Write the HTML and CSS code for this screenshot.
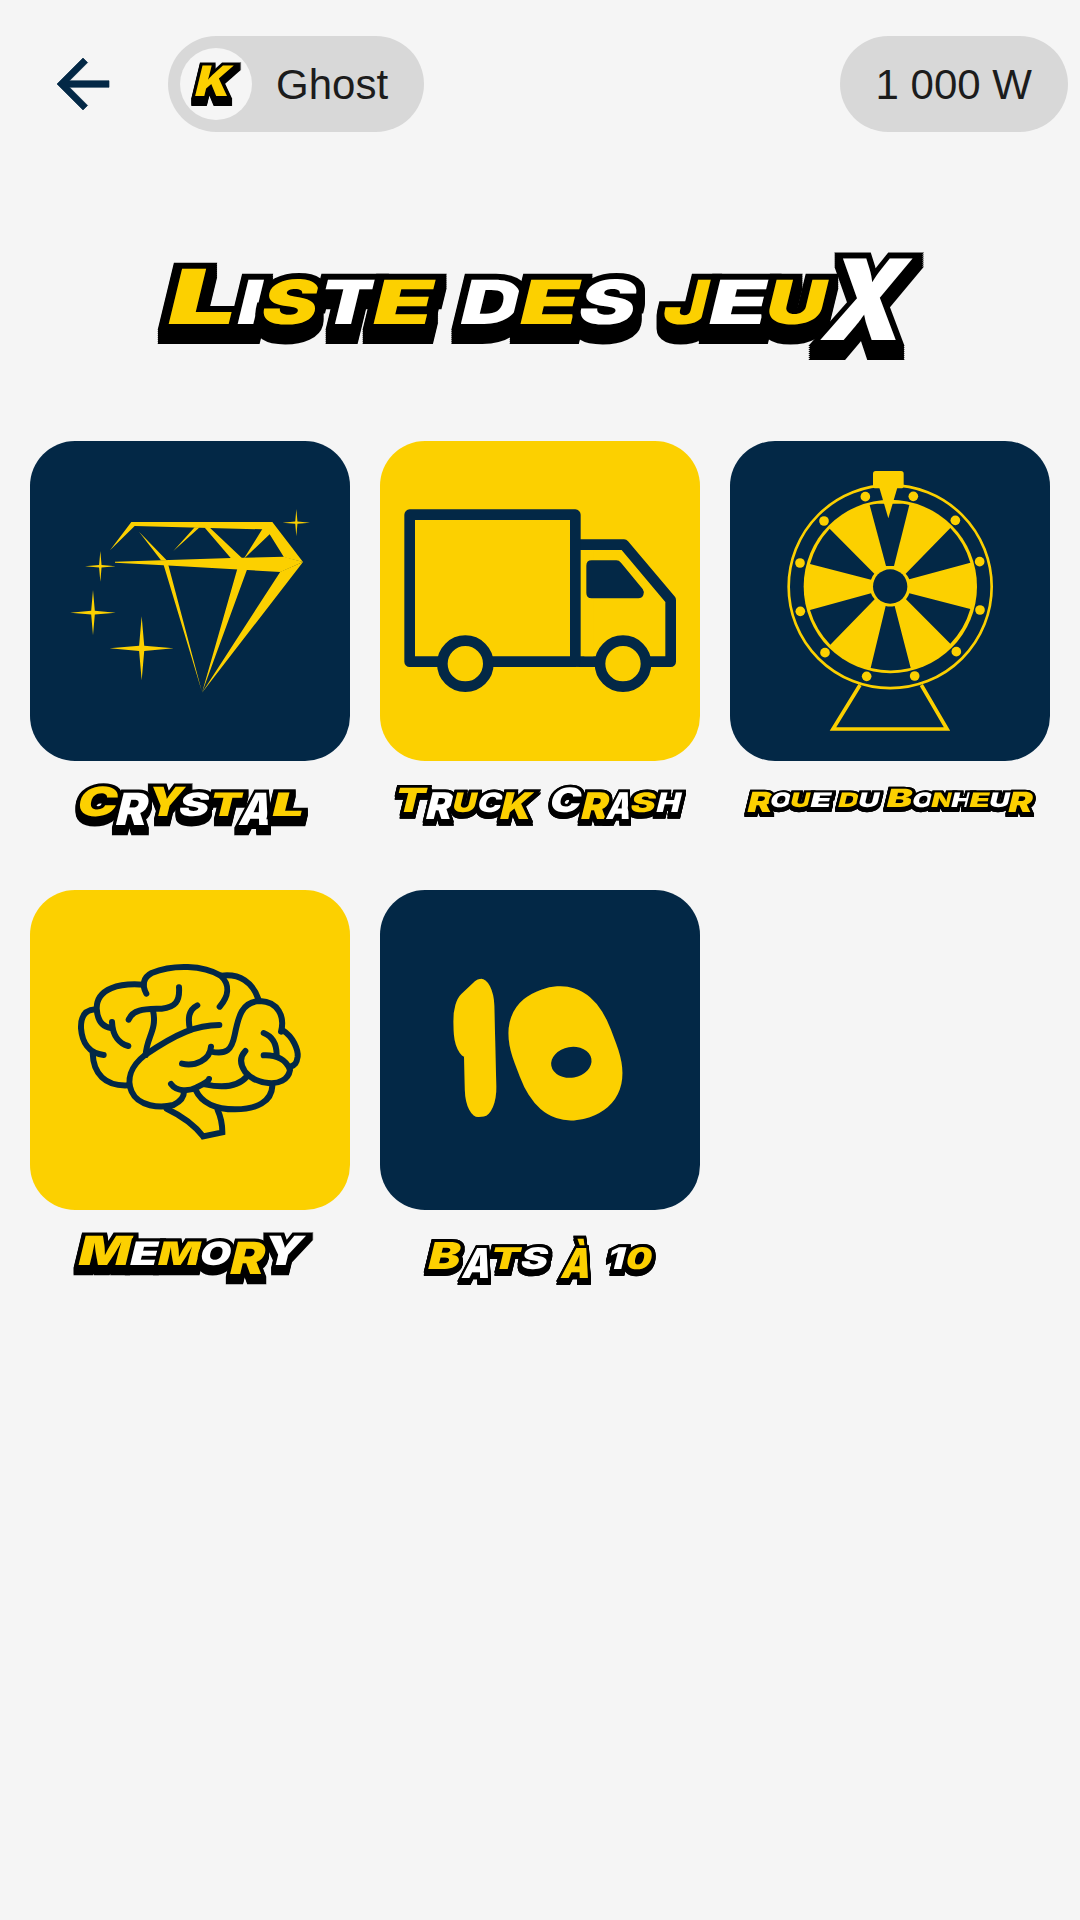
FILE: index.html
```html
<!DOCTYPE html>
<html lang="fr">
<head>
    <meta charset="UTF-8">
    <title>Liste des jeux</title>
    <link rel="stylesheet" href="styles.css">
</head>
<body>
    <header class="topbar">
        <a class="back" href="#">
            <svg width="78" height="78" viewBox="0 0 24 24"><path d="M20 11H7.83l5.59-5.59L12 4l-8 8 8 8 1.41-1.41L7.83 13H20v-2z"/></svg>
        </a>
        <div class="pill user">
            <div class="avatar">
                <svg class="logo logo-k" width="46" height="44" viewBox="0 0 46 44">
                    <text transform="translate(0 33.5) skewX(-13.6)"><tspan class="y" x="0" textLength="35" lengthAdjust="spacingAndGlyphs">K</tspan></text>
                </svg>
            </div>
            <span>Ghost</span>
        </div>
        <div class="pill solde"><span>1 000 W</span></div>
    </header>

    <h1 class="titre">
        <svg class="logo logo-titre" width="764" height="110" viewBox="0 0 764 110">
            <text transform="translate(0 72.7) skewX(-13.6)"><tspan class="y cap" x="5" textLength="69" lengthAdjust="spacingAndGlyphs">L</tspan><tspan x="76" textLength="23" lengthAdjust="spacingAndGlyphs">i</tspan><tspan class="y" x="100" textLength="56" lengthAdjust="spacingAndGlyphs">s</tspan><tspan x="157" textLength="56" lengthAdjust="spacingAndGlyphs">t</tspan><tspan class="y" x="211" textLength="60" lengthAdjust="spacingAndGlyphs">e</tspan> <tspan x="299" textLength="60" lengthAdjust="spacingAndGlyphs">d</tspan><tspan class="y" x="358" textLength="59" lengthAdjust="spacingAndGlyphs">e</tspan><tspan x="417" textLength="57" lengthAdjust="spacingAndGlyphs">s</tspan> <tspan class="y" x="502" textLength="46" lengthAdjust="spacingAndGlyphs">j</tspan><tspan x="547" textLength="59" lengthAdjust="spacingAndGlyphs">e</tspan><tspan class="y" x="604" textLength="60" lengthAdjust="spacingAndGlyphs">u</tspan><tspan class="big" x="664" y="16" textLength="80" lengthAdjust="spacingAndGlyphs">X</tspan></text>
        </svg>
    </h1>

    <main class="jeux">
        <a class="jeu" href="#">
            <div class="carte bleu">
                <svg width="320" height="320" viewBox="0 3 960 960">
                    <defs><path id="etoile" d="M0-1 .08-.08 1 0 .08.08 0 1-.08.08-1 0-.08-.08z"/></defs>
                    <g class="plein">
                        <path d="M240 331 304 246H727L719 268 697 268 314 258z"/>
                        <path d="M727 246 819 366 762 352 719 283 641 357 697 267z"/>
                        <path d="M255 365 604 354 762 350 819 366 751 396 401 376 255 368z"/>
                        <path d="M327 275 410 361H393z M430 333 494 262H509z M523 262H538L638 356H604z"/>
                        <path d="M401 375H415L516 756z M622 386H652L516 758z M751 395 819 366 516 758z"/>
                        <use href="#etoile" transform="translate(211 379) scale(46)"/>
                        <use href="#etoile" transform="translate(189 518) scale(68)"/>
                        <use href="#etoile" transform="translate(335 625) scale(96)"/>
                        <use href="#etoile" transform="translate(799 248) scale(41)"/>
                    </g>
                </svg>
            </div>
            <svg class="logo logo-crystal" width="233" height="70" viewBox="0 0 233 70">
                <text transform="translate(0 33) skewX(-13.6)"><tspan class="y cap" x="1" textLength="40" lengthAdjust="spacingAndGlyphs">C</tspan><tspan class="leg" x="42" y="9" textLength="31" lengthAdjust="spacingAndGlyphs">r</tspan><tspan class="y cap" x="71" y="0" textLength="35" lengthAdjust="spacingAndGlyphs">y</tspan><tspan x="103" textLength="30" lengthAdjust="spacingAndGlyphs">s</tspan><tspan class="y" x="134" textLength="31" lengthAdjust="spacingAndGlyphs">t</tspan><tspan class="leg" x="166" y="9" textLength="31" lengthAdjust="spacingAndGlyphs">a</tspan><tspan class="y" x="196" y="0" textLength="32" lengthAdjust="spacingAndGlyphs">l</tspan></text>
            </svg>
        </a>

        <a class="jeu" href="#">
            <div class="carte jaune">
                <svg width="320" height="320" viewBox="0 3 960 960">
                    <g class="camion">
                        <path d="M597 314H732L872 480V665H597z"/>
                        <path d="M89 224H586V665H89z"/>
                        <circle cx="256" cy="671" r="69"/>
                        <circle cx="729" cy="671" r="69"/>
                    </g>
                    <path class="cabine" d="M602 330H640V649H602z"/>
                    <path class="vitre" d="M635 361H709Q717 361 723 368L788 447Q794 455 790 465 786 475 775 475H635Q619 475 619 459V377Q619 361 635 361z"/>
                </svg>
            </div>
            <svg class="logo logo-truck" width="291" height="70" viewBox="0 -3 291 70">
                <text transform="translate(0 26.3) skewX(-13.6)"><tspan class="y cap" x="-2" textLength="30" lengthAdjust="spacingAndGlyphs">T</tspan><tspan class="leg" x="31" y="7" textLength="26" lengthAdjust="spacingAndGlyphs">r</tspan><tspan class="y" x="56" y="0" textLength="24" lengthAdjust="spacingAndGlyphs">u</tspan><tspan x="81" textLength="25" lengthAdjust="spacingAndGlyphs">c</tspan><tspan class="y leg" x="105" y="7" textLength="31" lengthAdjust="spacingAndGlyphs">k</tspan> <tspan class="cap" x="153" y="0" textLength="31" lengthAdjust="spacingAndGlyphs">C</tspan><tspan class="y leg" x="186" y="7" textLength="27" lengthAdjust="spacingAndGlyphs">r</tspan><tspan class="leg" x="212" y="7" textLength="24" lengthAdjust="spacingAndGlyphs">a</tspan><tspan class="y" x="234" y="0" textLength="25" lengthAdjust="spacingAndGlyphs">s</tspan><tspan x="260" textLength="24" lengthAdjust="spacingAndGlyphs">h</tspan></text>
            </svg>
        </a>

        <a class="jeu" href="#">
            <div class="carte bleu">
                <svg width="320" height="320" viewBox="0 3 960 960">
                    <g class="trait">
                        <circle cx="480.500" cy="440" r="304.500" stroke-width="8"/>
                        <path d="M390 735 309 867H651L574 735" stroke-width="11"/>
                    </g>
                    <circle class="plein" cx="481" cy="439.500" r="260"/>
                    <g class="creux">
                        <path d="M492 378 538 195A251 251 0 0 0 519 191H442A251 251 0 0 0 419 195L468 378z"/>
                        <path d="M538 418 721 368A251 251 0 0 0 661 264L527 401Q534 408 538 418z"/>
                        <path d="M538 460 721 507A251 251 0 0 1 661 611L528 478Q535 470 538 460z"/>
                        <path d="M494 498 542 684A251 251 0 0 1 422 684L467 498Q480 501 494 498z"/>
                        <path d="M423 460 240 510A251 251 0 0 0 301 614L434 478Q426 470 423 460z"/>
                        <path d="M423 419 240 372A251 251 0 0 1 299 266L433 401Q426 408 423 419z"/>
                        <circle cx="480.500" cy="439.500" r="51.500"/>
                    </g>
                    <g class="plein">
                        <circle cx="406" cy="170" r="14.500"/><circle cx="550" cy="169" r="14.500"/>
                        <circle cx="282" cy="243" r="14.500"/><circle cx="676" cy="241" r="14.500"/>
                        <circle cx="210" cy="369" r="14.500"/><circle cx="749" cy="365" r="14.500"/>
                        <circle cx="211" cy="514" r="14.500"/><circle cx="750" cy="510" r="14.500"/>
                        <circle cx="285" cy="638" r="14.500"/><circle cx="679" cy="635" r="14.500"/>
                        <circle cx="410" cy="709" r="14.500"/><circle cx="554" cy="708" r="14.500"/>
                        <rect x="429" y="93" width="92" height="52" rx="8"/>
                        <path d="M448 143H502L475 235z"/>
                    </g>
                </svg>
            </div>
            <svg class="logo logo-roue" width="291" height="70" viewBox="0 -3 291 70">
                <text transform="translate(0 20.7) skewX(-13.6)"><tspan class="y leg" x="2" y="5" textLength="25" lengthAdjust="spacingAndGlyphs">R</tspan><tspan x="24" y="0" textLength="21" lengthAdjust="spacingAndGlyphs">o</tspan><tspan class="y" x="44" textLength="21" lengthAdjust="spacingAndGlyphs">u</tspan><tspan x="64" textLength="21" lengthAdjust="spacingAndGlyphs">e</tspan> <tspan class="y" x="92" textLength="21" lengthAdjust="spacingAndGlyphs">d</tspan><tspan x="112" textLength="21" lengthAdjust="spacingAndGlyphs">u</tspan> <tspan class="y cap" x="140" textLength="26" lengthAdjust="spacingAndGlyphs">B</tspan><tspan x="166" textLength="21" lengthAdjust="spacingAndGlyphs">o</tspan><tspan class="y" x="185" textLength="22" lengthAdjust="spacingAndGlyphs">n</tspan><tspan x="205" textLength="21" lengthAdjust="spacingAndGlyphs">h</tspan><tspan class="y" x="223" textLength="21" lengthAdjust="spacingAndGlyphs">e</tspan><tspan x="243" textLength="21" lengthAdjust="spacingAndGlyphs">u</tspan><tspan class="y leg" x="263" y="5" textLength="24" lengthAdjust="spacingAndGlyphs">r</tspan></text>
            </svg>
        </a>

        <a class="jeu" href="#">
            <div class="carte jaune">
                <svg width="320" height="320" viewBox="0 0 960 960">
                    <g class="cerveau">
                        <path d="M349 311C335 285 340 262 365 249C430 222 520 225 572 257C602 285 595 320 569 350"/>
                        <path d="M574 257C630 250 668 278 684 325"/>
                        <path d="M341 284C270 278 200 295 200 355C202 390 215 410 242 414M246 396C248 440 270 462 295 468"/>
                        <path d="M197 358C160 360 152 385 153 415C156 455 175 490 221 495"/>
                        <path d="M188 490C190 550 225 590 295 586"/>
                        <path d="M568 405C500 405 440 430 345 495C300 530 290 570 305 605C325 650 390 655 430 645C450 635 462 620 462 605"/>
                        <path d="M447 292C450 335 435 352 395 356C350 358 310 355 296 389"/>
                        <path d="M369 362C382 420 350 440 347 495"/>
                        <path d="M502 346C475 360 473 385 480 420"/>
                        <path d="M456 521C495 530 540 510 543 470M543 485C590 495 605 480 614 435C625 380 635 335 690 333C745 335 765 380 753 425"/>
                        <path d="M757 420C790 440 805 480 803 500C800 520 795 525 782 530"/>
                        <path d="M701 429C730 440 740 465 740 495M701 496C740 494 770 510 780 540C775 570 745 582 715 579C690 577 665 568 645 545C628 520 630 500 646 483"/>
                        <path d="M423 582C440 605 475 605 500 592C520 582 535 575 537 567M525 583C580 595 625 590 652 558"/>
                        <path d="M497 600C515 640 560 658 615 658C680 658 725 635 727 588"/>
                        <path class="tronc" d="M410 656C450 675 490 700 519 739L577 727C577 700 572 680 563 660"/>
                    </g>
                </svg>
            </div>
            <svg class="logo logo-crystal" width="233" height="70" viewBox="0 0 233 70">
                <text transform="translate(0 33) skewX(-13.6)"><tspan class="y cap" x="2" textLength="53" lengthAdjust="spacingAndGlyphs">M</tspan><tspan x="54" textLength="29" lengthAdjust="spacingAndGlyphs">e</tspan><tspan class="y" x="82" textLength="42" lengthAdjust="spacingAndGlyphs">m</tspan><tspan x="124" textLength="31" lengthAdjust="spacingAndGlyphs">o</tspan><tspan class="y leg" x="156" y="9" textLength="34" lengthAdjust="spacingAndGlyphs">r</tspan><tspan class="cap" x="187" y="0" textLength="39" lengthAdjust="spacingAndGlyphs">y</tspan></text>
            </svg>
        </a>

        <a class="jeu" href="#">
            <div class="carte bleu">
                <svg width="320" height="320" viewBox="0 0 960 960">
                    <text class="dix"><tspan class="un" x="252" y="601" rotate="-3" textLength="90" lengthAdjust="spacingAndGlyphs">1</tspan><tspan x="497" y="662" rotate="-20" textLength="234" lengthAdjust="spacingAndGlyphs">0</tspan></text>
                    <ellipse class="creux" cx="574" cy="517" rx="61" ry="46" transform="rotate(-10 574 517)"/>
                </svg>
            </div>
            <svg class="logo logo-bats" width="233" height="70" viewBox="0 0 233 70">
                <text transform="translate(0 37) skewX(-13.6)"><tspan class="y cap" x="2" textLength="32" lengthAdjust="spacingAndGlyphs">B</tspan><tspan class="leg" x="39" y="9" textLength="28" lengthAdjust="spacingAndGlyphs">a</tspan><tspan class="y" x="65" y="0" textLength="29" lengthAdjust="spacingAndGlyphs">t</tspan><tspan x="95" textLength="27" lengthAdjust="spacingAndGlyphs">s</tspan> <tspan class="y leg" x="138" y="9" textLength="29" lengthAdjust="spacingAndGlyphs">à</tspan> <tspan x="182" y="0" textLength="17" lengthAdjust="spacingAndGlyphs">1</tspan><tspan class="y" x="200" textLength="26" lengthAdjust="spacingAndGlyphs">0</tspan></text>
            </svg>
        </a>
    </main>
</body>
</html>
```

FILE: styles.css
```css
body {
    margin: 0;
    min-height: 1920px;
    background-color: #f5f5f5;
    color: #1c1c1c;
    font-family: "Liberation Sans", Arial, sans-serif;
    font-size: 42px;
}

svg {
    display: block;
}

.topbar {
    display: flex;
    align-items: center;
    height: 96px;
    padding: 36px 12px 0 44px;
}

.back {
    margin-right: 46px;
}

.back svg {
    fill: #032846;
    stroke: #032846;
    stroke-width: 0.2px;
}

.pill {
    display: flex;
    align-items: center;
    box-sizing: border-box;
    height: 96px;
    padding: 0 36px;
    border-radius: 48px;
    background-color: #d8d8d8;
    white-space: nowrap;
}

.pill span {
    padding-top: 2px;
}

.user {
    gap: 24px;
    padding-left: 12px;
}

.solde {
    margin-left: auto;
}

.avatar {
    display: flex;
    align-items: center;
    justify-content: center;
    width: 72px;
    height: 72px;
    border-radius: 50%;
    background-color: #f5f5f5;
}

.titre {
    display: flex;
    justify-content: center;
    margin: 119px 0 80px;
}

/* lettrage : --u = echelle par rapport au titre principal */
.logo {
    --u: 1;
    overflow: visible;
    filter: drop-shadow(0 calc(2px * var(--u)) 0 #000) drop-shadow(0 calc(4px * var(--u)) 0 #000) drop-shadow(0 calc(8px * var(--u)) 0 #000);
}

.logo text {
    font-family: Inter, "DejaVu Sans", sans-serif;
    font-weight: 900;
    font-size: calc(61px * var(--u));
    text-transform: uppercase;
    fill: #fff;
    stroke: #000;
    stroke-width: calc(12px * var(--u));
    stroke-linejoin: miter;
    stroke-miterlimit: 3;
    paint-order: stroke;
}

.logo .y {
    fill: #fcd000;
}

.logo .cap {
    font-size: calc(76px * var(--u));
}

.logo .leg {
    font-size: calc(84px * var(--u));
}

.logo .big {
    font-size: calc(112px * var(--u));
}

.logo-crystal {
    --u: 0.53;
}

.logo-truck {
    --u: 0.44;
}

.logo-roue {
    --u: 0.33;
}

.logo-bats {
    --u: 0.49;
}

.logo-k {
    --u: 0.5;
}

.logo-k text {
    font-size: 42px;
}

.jeux {
    display: grid;
    grid-template-columns: repeat(3, 320px);
    grid-auto-rows: 449px;
    justify-content: center;
    column-gap: 30px;
}

.jeu {
    display: flex;
    flex-direction: column;
    align-items: center;
    gap: 22px;
}

.carte {
    width: 320px;
    height: 320px;
    border-radius: 45px;
    overflow: hidden;
}

.bleu {
    background-color: #032846;
}

.jaune {
    background-color: #fcd000;
}

.plein,
.cabine {
    fill: #fcd000;
}

.creux,
.vitre {
    fill: #032846;
}

.trait {
    fill: none;
    stroke: #fcd000;
}

.camion {
    fill: #fcd000;
    stroke: #032846;
    stroke-width: 32px;
    stroke-linejoin: round;
}

.cerveau {
    fill: none;
    stroke: #032846;
    stroke-width: 18px;
    stroke-linecap: round;
    stroke-linejoin: round;
}

.cerveau .tronc {
    stroke-linejoin: miter;
}

.dix {
    font-family: Roboto, sans-serif;
    font-size: 400px;
    fill: #fcd000;
    stroke: #fcd000;
    stroke-width: 115px;
    stroke-linejoin: round;
}

.dix .un {
    font-size: 340px;
    stroke-width: 170px;
}
```
